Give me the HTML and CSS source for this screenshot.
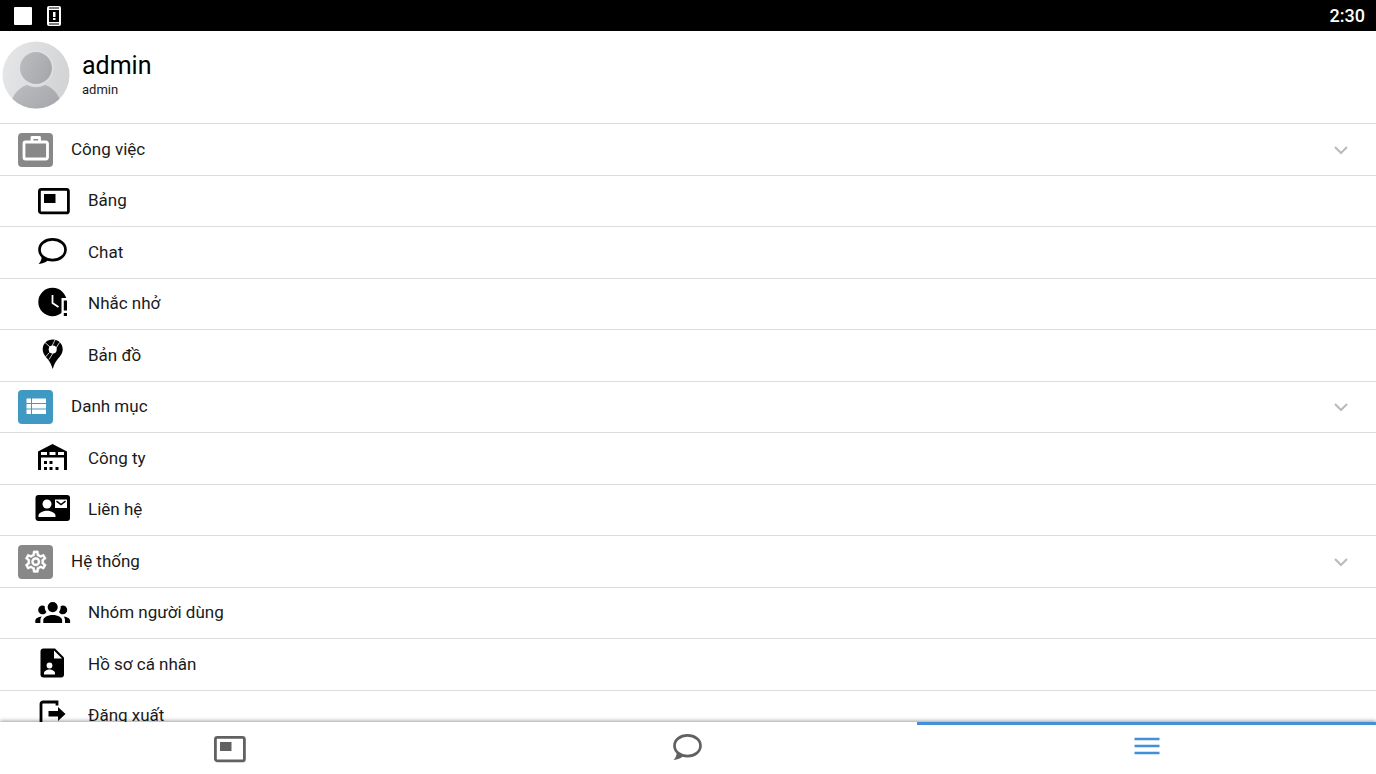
FILE: index.html
```html
<!DOCTYPE html>
<html lang="vi">
<head>
    <meta charset="UTF-8">
    <meta name="viewport" content="width=device-width, initial-scale=1.0">
    <title>Menu</title>
    <link rel="stylesheet" href="styles.css">
</head>
<body>

    <!-- Shared icons -->
    <svg class="sprite" aria-hidden="true">
        <symbol id="icon-board" viewBox="0 0 36 36">
            <rect x="4.400" y="6.400" width="29" height="23.500" rx="2" fill="none" stroke="currentColor" stroke-width="2.800"/>
            <path d="M9 11h11.500v9H9z" fill="currentColor"/>
        </symbol>
        <symbol id="icon-chat" viewBox="0 0 36 36">
            <path fill="none" stroke="currentColor" stroke-width="2.700" d="M17.500 4.400c7.300 0 13 4.500 13 10.300s-5.700 10.400-13 10.400-13-4.600-13-10.400 5.700-10.300 13-10.300z"/>
            <path fill="currentColor" d="M6.500 20.500c.6 3.200-.5 5.900-2.900 8.500 4.200-.5 7.100-1.500 9.200-3.400z"/>
        </symbol>
        <symbol id="icon-chevron" viewBox="0 0 16 16">
            <path d="M2 5l6 6 6-6" fill="none" stroke="currentColor" stroke-width="2.200"/>
        </symbol>
    </svg>

    <!-- Status bar -->
    <header class="status-bar">
        <svg class="status-icon" viewBox="0 0 20 22" aria-hidden="true">
            <rect x="1" y="2" width="18" height="18" rx="1" fill="#fff"/>
        </svg>
        <svg class="status-icon" viewBox="0 0 20 22" aria-hidden="true">
            <rect x="3" y="1" width="14" height="20" rx="2" fill="#fff"/>
            <path d="M5 2.500h10v1H5zM5 18.500h10v1H5zM5 5h10v12H5z" fill="#000"/>
            <path d="M9 7h2.500v5H9zM9 13h2.500v2H9z" fill="#fff"/>
        </svg>
        <time class="clock">2:30</time>
    </header>

    <main class="content">
        <!-- Profile -->
        <section class="profile">
            <svg class="avatar" viewBox="0 0 68 68" aria-hidden="true">
                <defs>
                    <linearGradient id="avatar-bg" x1="0" y1="0" x2="1" y2="0.3">
                        <stop offset="0" stop-color="#e7e8e9"/>
                        <stop offset="1" stop-color="#d3d4d6"/>
                    </linearGradient>
                    <linearGradient id="avatar-fg" x1="0" y1="0" x2="1" y2="0.5">
                        <stop offset="0" stop-color="#bcbdc0"/>
                        <stop offset="1" stop-color="#a8a9ac"/>
                    </linearGradient>
                    <clipPath id="avatar-clip"><circle cx="34" cy="34" r="33.5"/></clipPath>
                </defs>
                <g clip-path="url(#avatar-clip)">
                    <rect width="68" height="68" fill="url(#avatar-bg)"/>
                    <path d="M8 68c1-13 8-21 17-24 6 3 12 3 18 0 9 3 16 11 17 24z" fill="url(#avatar-fg)"/>
                    <circle cx="34" cy="27" r="17.500" fill="#e0e1e2"/>
                    <circle cx="34" cy="27" r="16" fill="url(#avatar-fg)"/>
                </g>
            </svg>
            <div>
                <h1 class="profile-name">admin</h1>
                <p class="profile-user">admin</p>
            </div>
        </section>

        <!-- Menu -->
        <nav class="menu">
            <button type="button" class="row group">
                <svg class="tile" viewBox="0 0 35 34" aria-hidden="true">
                    <rect width="35" height="34" rx="4" fill="#888"/>
                    <path d="M7.500 9h20.500a1.500 1.500 0 0 1 1.500 1.500v14a1.500 1.500 0 0 1-1.500 1.500H7.500a1.500 1.500 0 0 1-1.500-1.500v-14A1.500 1.500 0 0 1 7.500 9zM14 8.500V4.500h7.500v4" fill="none" stroke="#fff" stroke-width="2.800" stroke-linejoin="round"/>
                </svg>
                <span class="label">Công việc</span>
                <svg class="chevron" aria-hidden="true"><use href="#icon-chevron"/></svg>
            </button>
            <a href="#board" class="row item">
                <svg class="icon" aria-hidden="true"><use href="#icon-board"/></svg>
                <span class="label">Bảng</span>
            </a>
            <a href="#chat" class="row item">
                <svg class="icon" aria-hidden="true"><use href="#icon-chat"/></svg>
                <span class="label">Chat</span>
            </a>
            <a href="#reminders" class="row item">
                <svg class="icon" viewBox="0 0 36 36" aria-hidden="true">
                    <circle cx="17.500" cy="16" r="14.200"/>
                    <path d="M17.500 9v8l6 4" fill="none" stroke="#fff" stroke-width="1.800"/>
                    <path d="M26.500 12H36v20h-9.500z" fill="#fff"/>
                    <path d="M28.800 14.500h3.200v10h-3.200zM28.800 27h3.200v3h-3.200z"/>
                </svg>
                <span class="label">Nhắc nhở</span>
            </a>
            <a href="#map" class="row item">
                <svg class="icon" viewBox="0 0 36 36" aria-hidden="true">
                    <path d="M17.700 1.500c-5.700 0-10 4.200-10 9.700 0 4.300 2.600 7 5.300 10.300 2.100 2.600 3.200 5.200 4.700 9.500 1.500-4.300 2.600-6.900 4.700-9.500 2.700-3.300 5.300-6 5.300-10.300 0-5.500-4.300-9.700-10-9.700z"/>
                    <circle cx="17.700" cy="11.500" r="4" fill="#fff"/>
                    <path d="M10 4.500l5 4.500M14.500 14.500l-5 5.500M24.500 4.500l-10.500 17M17 8l3-6" fill="none" stroke="#fff" stroke-width="0.800"/>
                </svg>
                <span class="label">Bản đồ</span>
            </a>

            <button type="button" class="row group">
                <svg class="tile" viewBox="0 0 35 34" aria-hidden="true">
                    <rect width="35" height="34" rx="4" fill="#3f99c3"/>
                    <path d="M8.500 8.500h4.500v4.500H8.500zM14 8.500h14v4.500H14zM8.500 14h4.500v4.500H8.500zM14 14h14v4.500H14zM8.500 19.500h4.500V24H8.500zM14 19.500h14V24H14z" fill="#fff"/>
                </svg>
                <span class="label">Danh mục</span>
                <svg class="chevron" aria-hidden="true"><use href="#icon-chevron"/></svg>
            </button>
            <a href="#company" class="row item">
                <svg class="icon" viewBox="0 0 36 36" aria-hidden="true">
                    <path fill-rule="evenodd" d="M3 10.500L17.500 3 32 10.500V29h-3V16.500H6V29H3zM6 11v3h6v-3zM14.500 11v3h6v-3zM23 11v3h6v-3z"/>
                    <path d="M9 20h3v3H9zM14.500 20h3v3h-3zM9 26h3v3H9zM14.500 26h3v3h-3zM20.500 26h3v3h-3z"/>
                </svg>
                <span class="label">Công ty</span>
            </a>
            <a href="#contacts" class="row item">
                <svg class="icon" viewBox="0 0 36 36" aria-hidden="true">
                    <rect x="0.500" y="3" width="34.500" height="26" rx="3"/>
                    <circle cx="12" cy="12" r="4.500" fill="#fff"/>
                    <path d="M3.500 25v-1.500c0-3 5.500-4.700 8.500-4.700s8.500 1.700 8.500 4.700V25zM20 7.500h12V16H20z" fill="#fff"/>
                    <path d="M21.500 9.200l4.500 3.300 4.500-3.300" fill="none" stroke="#000" stroke-width="1.500"/>
                </svg>
                <span class="label">Liên hệ</span>
            </a>

            <button type="button" class="row group">
                <svg class="tile" viewBox="0 0 35 34" aria-hidden="true">
                    <rect width="35" height="34" rx="4" fill="#888"/>
                    <path transform="translate(4.800 3.700) scale(1.080)" fill="#fff" stroke="#fff" stroke-width="0.300" d="M19.430 12.980c.04-.32.07-.64.07-.98 0-.34-.03-.66-.07-.98l2.110-1.650c.19-.15.24-.42.12-.64l-2-3.460c-.09-.16-.26-.25-.44-.25-.06 0-.12.01-.17.03l-2.490 1c-.52-.4-1.080-.73-1.690-.98l-.38-2.650C14.460 2.180 14.250 2 14 2h-4c-.25 0-.46.18-.49.42l-.38 2.650c-.61.25-1.170.59-1.690.98l-2.490-1c-.06-.02-.12-.03-.18-.03-.17 0-.34.09-.43.25l-2 3.460c-.13.22-.07.49.12.64l2.110 1.650c-.04.32-.07.65-.07.98 0 .33.03.66.07.98l-2.110 1.650c-.19.15-.24.42-.12.64l2 3.460c.09.16.26.25.44.25.06 0 .12-.01.17-.03l2.490-1c.52.4 1.080.73 1.690.98l.38 2.650c.03.24.24.42.49.42h4c.25 0 .46-.18.49-.42l.38-2.650c.61-.25 1.170-.59 1.690-.98l2.490 1c.06.02.12.03.18.03.17 0 .34-.09.43-.25l2-3.460c.12-.22.07-.49-.12-.64l-2.110-1.650zm-1.980-1.710c.04.31.05.52.05.73 0 .21-.02.43-.05.73l-.14 1.130.89.7 1.080.84-.7 1.210-1.270-.51-1.040-.42-.9.68c-.43.32-.84.56-1.250.73l-1.060.43-.16 1.130-.2 1.350h-1.400l-.19-1.350-.16-1.130-1.060-.43c-.43-.18-.83-.41-1.230-.71l-.91-.7-1.060.43-1.270.51-.7-1.210 1.080-.84.89-.7-.14-1.130c-.03-.31-.05-.54-.05-.74s.02-.43.05-.73l.14-1.130-.89-.7-1.080-.84.7-1.210 1.270.51 1.040.42.9-.68c.43-.32.84-.56 1.250-.73l1.060-.43.16-1.130.2-1.350h1.390l.19 1.350.16 1.130 1.060.43c.43.18.83.41 1.230.71l.91.7 1.060-.43 1.270-.51.7 1.210-1.070.85-.89.7.14 1.130zM12 8c-2.210 0-4 1.790-4 4s1.790 4 4 4 4-1.790 4-4-1.790-4-4-4zm0 6c-1.100 0-2-.9-2-2s.9-2 2-2 2 .9 2 2-.9 2-2 2z"/>
                </svg>
                <span class="label">Hệ thống</span>
                <svg class="chevron" aria-hidden="true"><use href="#icon-chevron"/></svg>
            </button>
            <a href="#groups" class="row item">
                <svg class="icon" viewBox="0 0 36 36" aria-hidden="true">
                    <path transform="translate(0.300 -1) scale(1.450)" d="M12 5.500A3.500 3.500 0 0 1 15.500 9 3.500 3.500 0 0 1 12 12.500 3.500 3.500 0 0 1 8.500 9 3.500 3.500 0 0 1 12 5.500M5 8c.56 0 1.080.15 1.530.42-.15 1.430.27 2.850 1.130 3.960C7.160 13.340 6.160 14 5 14a3 3 0 0 1-3-3 3 3 0 0 1 3-3m14 0a3 3 0 0 1 3 3 3 3 0 0 1-3 3c-1.160 0-2.160-.66-2.660-1.620.86-1.110 1.280-2.530 1.130-3.960C17.920 8.150 18.440 8 19 8M5.500 18.250c0-2.070 2.910-3.750 6.500-3.750s6.500 1.680 6.500 3.750V20h-13v-1.750M0 20v-1.500c0-1.390 1.890-2.560 4.450-2.900-.59.68-.95 1.620-.95 2.650V20H0m24 0h-3.500v-1.750c0-1.030-.36-1.970-.95-2.650 2.560.34 4.450 1.510 4.450 2.900z"/>
                </svg>
                <span class="label">Nhóm người dùng</span>
            </a>
            <a href="#profile" class="row item">
                <svg class="icon" viewBox="0 0 36 36" aria-hidden="true">
                    <path d="M8.500 1.500H20L29 10.500V27.500a3 3 0 0 1-3 3H8.500a3 3 0 0 1-3-3v-23a3 3 0 0 1 3-3z"/>
                    <path d="M19 3.500v8h8zM9 27.500v-1.300c0-2.400 3.500-3.700 5.500-3.700s5.500 1.300 5.500 3.700v1.300z" fill="#fff"/>
                    <circle cx="14.500" cy="18.500" r="2.900" fill="#fff"/>
                </svg>
                <span class="label">Hồ sơ cá nhân</span>
            </a>
            <a href="#logout" class="row item">
                <svg class="icon" viewBox="0 0 36 36" aria-hidden="true">
                    <path d="M22 7.500V4H8a2 2 0 0 0-2 2v20a2 2 0 0 0 2 2h14V24.500" fill="none" stroke="#000" stroke-width="2.800"/>
                    <path d="M13.500 13h9.500V9l7.500 7-7.500 7v-4.500h-9.500z"/>
                </svg>
                <span class="label">Đăng xuất</span>
            </a>
        </nav>
    </main>

    <!-- Bottom tabs -->
    <nav class="tabs">
        <a href="#board" class="tab" aria-label="Bảng">
            <svg class="icon" aria-hidden="true"><use href="#icon-board"/></svg>
        </a>
        <a href="#chat" class="tab" aria-label="Chat">
            <svg class="icon" aria-hidden="true"><use href="#icon-chat"/></svg>
        </a>
        <a href="#menu" class="tab active" aria-label="Menu">
            <svg class="icon" viewBox="0 0 36 36" aria-hidden="true">
                <path d="M5.500 8h25M5.500 15h25M5.500 22h25" fill="none" stroke="currentColor" stroke-width="2.600"/>
            </svg>
        </a>
    </nav>

</body>
</html>
```

FILE: styles.css
```css
* {
    box-sizing: border-box;
}
body {
    display: flex;
    flex-direction: column;
    height: 100vh;
    margin: 0;
    background: #fff;
    color: #1a1a1a;
    font-family: Roboto, "Noto Sans", sans-serif;
    font-size: 17px;
}
svg {
    display: block;
    flex: none;
}
.sprite {
    display: none;
}

/* Status bar */
.status-bar {
    display: flex;
    flex: none;
    align-items: center;
    gap: 11px;
    height: 31px;
    padding: 0 11px 0 13px;
    background: #000;
    color: #fff;
}
.status-icon {
    width: 20px;
    height: 22px;
}
.clock {
    margin-left: auto;
    font-size: 18px;
    font-weight: 500;
}

/* Profile */
.content {
    flex: 1;
    min-height: 0;
    overflow-y: auto;
    scrollbar-width: none;
}
.profile {
    display: flex;
    align-items: center;
    gap: 12px;
    padding: 10px 2px 14px;
}
.avatar {
    width: 68px;
    height: 68px;
}
.profile-name {
    margin: 0;
    color: #000;
    font-size: 25px;
    font-weight: 400;
    line-height: 30px;
}
.profile-user {
    margin: 0;
    font-size: 13px;
    line-height: 18px;
}

/* Menu rows */
.row {
    display: flex;
    align-items: center;
    gap: 18px;
    width: 100%;
    min-height: 52px;
    border: 0;
    border-top: 1px solid #dcdcdc;
    background: none;
    color: inherit;
    font: inherit;
    text-align: left;
    text-decoration: none;
    cursor: pointer;
}
.row:nth-child(even) {
    min-height: 51px;
}
.row:hover {
    background: #f7f7f7;
}
.group {
    padding: 0 27px 0 18px;
}
.item {
    padding: 0 27px 0 35px;
}
.label {
    flex: 1;
    padding-bottom: 2px;
    line-height: 24px;
}
.tile {
    width: 35px;
    height: 34px;
}
.icon {
    width: 36px;
    height: 36px;
    color: #000;
}
.item .icon {
    margin-right: -1px;
}
.chevron {
    width: 16px;
    height: 16px;
    color: #bbb;
}

/* Bottom tabs */
.tabs {
    display: flex;
    flex: none;
    z-index: 1;
    background: #fff;
    box-shadow: 0 -1px 4px rgba(0, 0, 0, 0.4);
}
.tab {
    display: flex;
    flex: 1;
    justify-content: center;
    padding: 6px 0 7px;
    border-top: 3px solid transparent;
}
.tab .icon {
    color: #616161;
}
.tab.active {
    border-top-color: #4290d9;
}
.tab.active .icon {
    color: #4290d9;
}
```
